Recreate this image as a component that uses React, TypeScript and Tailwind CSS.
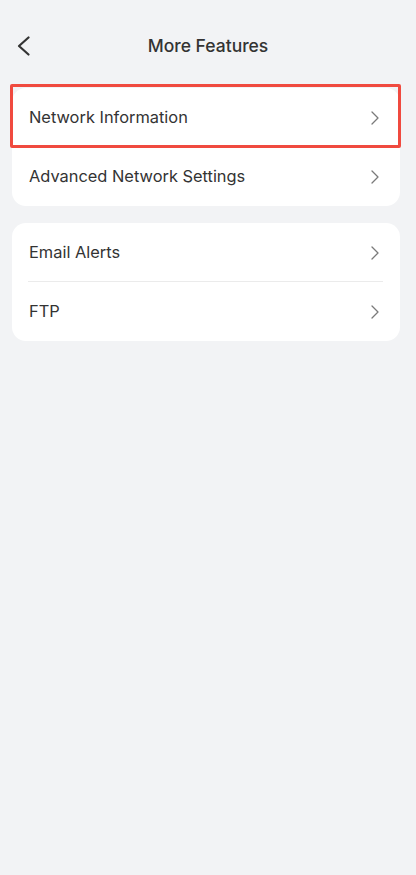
import { ChevronRight } from "lucide-react";

const groups = [
  ["Network Information", "Advanced Network Settings"],
  ["Email Alerts", "FTP"],
];

function Row({ label, divider }: { label: string; divider: boolean }) {
  return (
    <div className="relative flex items-center justify-between h-[59px] pl-[17px] pr-[13px]">
      <span className="text-[16.4px] text-[#333333]">{label}</span>
      <ChevronRight className="w-[24px] h-[24px] text-[#7a7a7a]" strokeWidth={1.3} />
      {divider && (
        <div className="absolute bottom-0 left-[16px] right-[17px] h-px bg-[#ebebeb]" />
      )}
    </div>
  );
}

export default function App() {
  return (
    <div
      className="min-h-[875px] w-full bg-[#f2f3f5] pt-[24px]"
      style={{ fontFamily: "Inter, 'Noto Sans', sans-serif" }}
    >
      <header className="relative flex items-center justify-center h-[44px]">
        <button className="absolute left-[16px] top-[12px]">
          <svg width="14" height="20" viewBox="0 0 14 20" fill="none">
            <path
              d="M12.5 1.5 L3 10 L12.5 18.5"
              stroke="#333333"
              strokeWidth="2.2"
              strokeLinecap="round"
              strokeLinejoin="round"
            />
          </svg>
        </button>
        <h1 className="text-[17.5px] font-medium text-[#333333]">More Features</h1>
      </header>

      <div className="flex flex-col gap-[17px] ml-[12px] mr-[16px] mt-[20px]">
        {groups.map((items, gi) => (
          <div key={gi} className="relative bg-white rounded-[14px]">
            {items.map((label, i) => (
              <Row key={label} label={label} divider={gi === 1 && i < items.length - 1} />
            ))}
            {gi === 0 && (
              <div className="absolute -left-[2px] -right-[1px] -top-[4px] h-[64px] border-[3px] border-[#f04a3f] rounded-[2px]" />
            )}
          </div>
        ))}
      </div>
    </div>
  );
}
